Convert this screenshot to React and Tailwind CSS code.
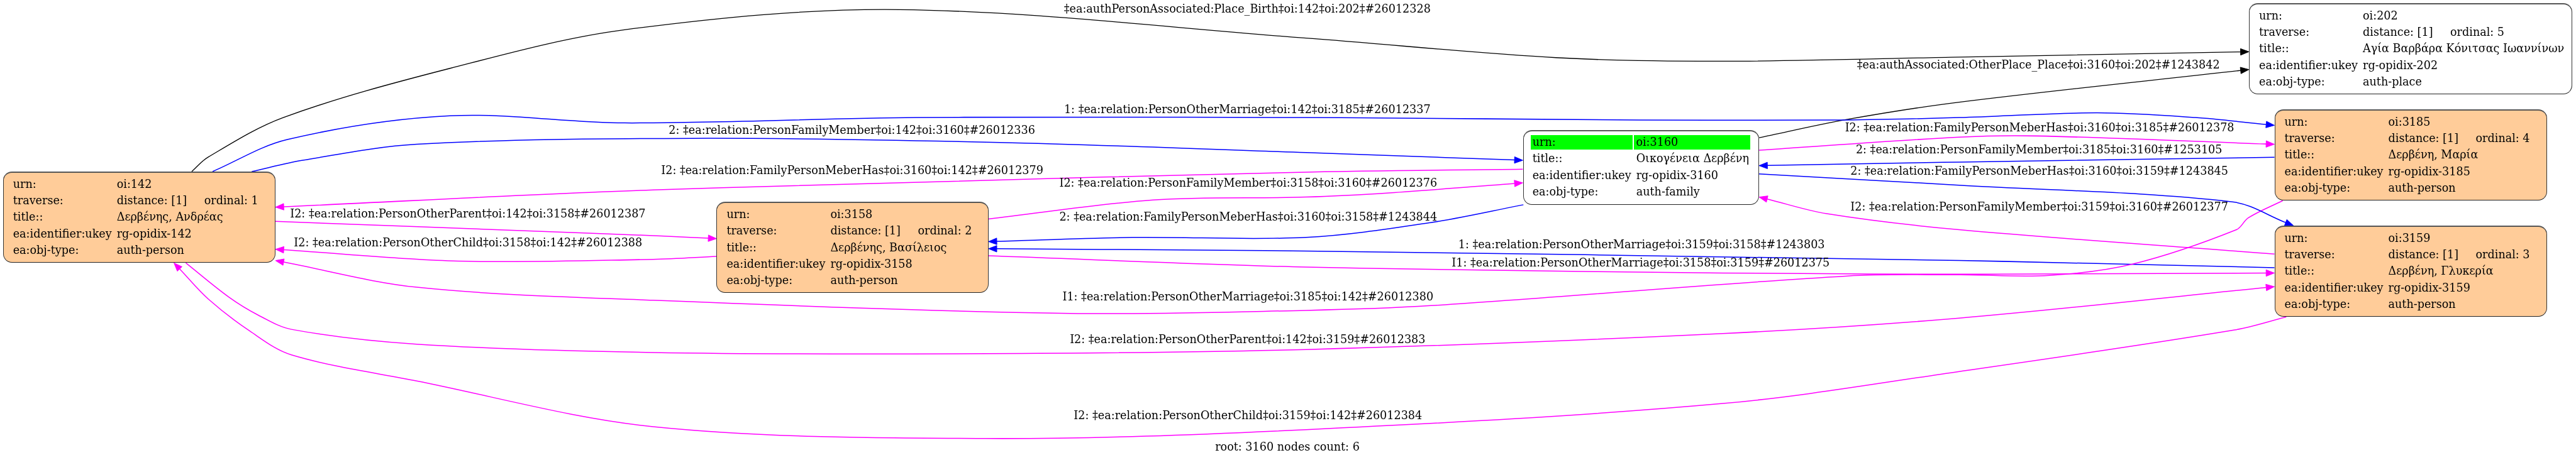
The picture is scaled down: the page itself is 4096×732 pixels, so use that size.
import React from "react";

const BLACK = "#000000";
const BLUE = "#0000ff";
const PINK = "#ff00ff";
const ARROW_LEN = 14;
const ARROW_HALF = 5.5;

// edge points are in the graph's own coordinates (viewBox 4339x775), last point is the arrow tip
const EDGES = [
  { c: BLACK, p: [[323, 289], [350, 265], [477, 198], [758, 115], [1052, 50], [1515, 16], [2200, 64], [2621, 97], [2902, 103], [3300, 96], [3788, 87]] },
  { c: BLACK, p: [[2963, 232], [3112, 201], [3300, 172], [3788, 117]] },
  { c: BLUE, p: [[358, 289], [484, 235], [758, 195], [1052, 207], [1543, 198], [2200, 198], [2761, 202], [3112, 202], [3300, 198], [3532, 190], [3698, 198], [3831, 211]] },
  { c: BLUE, p: [[424, 289], [510, 270], [702, 243], [1165, 233], [1684, 240], [2200, 257], [2565, 270]] },
  { c: PINK, p: [[2565, 285], [2200, 290], [1100, 320], [464, 349]] },
  { c: PINK, p: [[1665, 369], [1942, 337], [2200, 332], [2340, 325], [2565, 308]] },
  { c: BLUE, p: [[2566, 345], [2410, 375], [2200, 400], [1907, 400], [1665, 407]] },
  { c: PINK, p: [[464, 373], [1100, 397], [1207, 402]] },
  { c: PINK, p: [[1207, 432], [1100, 437], [772, 440], [464, 420]] },
  { c: BLUE, p: [[3831, 451], [3300, 439], [2200, 423], [1665, 419]] },
  { c: PINK, p: [[1665, 431], [2200, 450], [2902, 460], [3300, 462], [3831, 460]] },
  { c: PINK, p: [[3845, 338], [3787, 367], [3767, 387], [3592, 445], [3452, 464], [3300, 463], [3112, 465], [2410, 515], [2200, 523], [1802, 528], [1100, 506], [702, 484], [464, 439]] },
  { c: PINK, p: [[313, 443], [386, 501], [435, 531], [491, 555], [702, 580], [1100, 594], [1661, 596], [2200, 589], [2902, 562], [3300, 536], [3831, 483]] },
  { c: PINK, p: [[3851, 534], [3764, 556], [3300, 626], [2902, 680], [2200, 724], [1661, 739], [1100, 719], [702, 642], [491, 598], [421, 558], [351, 504], [293, 443]] },
  { c: PINK, p: [[2963, 253], [3300, 231], [3432, 229], [3831, 243]] },
  { c: BLUE, p: [[3831, 265], [3300, 273], [2963, 279]] },
  { c: BLUE, p: [[2963, 293], [3300, 312], [3760, 340], [3863, 380]] },
  { c: PINK, p: [[3831, 428], [3300, 387], [3077, 360], [2963, 332]] },
];

const LABELS = [
  { t: "‡ea:authPersonAssociated:Place_Birth‡oi:142‡oi:202‡#26012328", pos: "left-[1983.3px] top-[15.1px]" },
  { t: "‡ea:authAssociated:OtherPlace_Place‡oi:3160‡oi:202‡#1243842", pos: "left-[3241.2px] top-[104.3px]" },
  { t: "1: ‡ea:relation:PersonOtherMarriage‡oi:142‡oi:3185‡#26012337", pos: "left-[1983.3px] top-[174.6px]" },
  { t: "2: ‡ea:relation:PersonFamilyMember‡oi:142‡oi:3160‡#26012336", pos: "left-[1354.6px] top-[207.7px]" },
  { t: "I2: ‡ea:relation:FamilyPersonMeberHas‡oi:3160‡oi:142‡#26012379", pos: "left-[1355.1px] top-[272.3px]" },
  { t: "I2: ‡ea:relation:PersonFamilyMember‡oi:3158‡oi:3160‡#26012376", pos: "left-[1984.8px] top-[292.2px]" },
  { t: "2: ‡ea:relation:FamilyPersonMeberHas‡oi:3160‡oi:3158‡#1243844", pos: "left-[1984.8px] top-[345.5px]" },
  { t: "I2: ‡ea:relation:PersonOtherParent‡oi:142‡oi:3158‡#26012387", pos: "left-[743.9px] top-[341.3px]" },
  { t: "I2: ‡ea:relation:PersonOtherChild‡oi:3158‡oi:142‡#26012388", pos: "left-[744.3px] top-[387px]" },
  { t: "1: ‡ea:relation:PersonOtherMarriage‡oi:3159‡oi:3158‡#1243803", pos: "left-[2610.2px] top-[389.9px]" },
  { t: "I1: ‡ea:relation:PersonOtherMarriage‡oi:3158‡oi:3159‡#26012375", pos: "left-[2608.8px] top-[419.1px]" },
  { t: "I1: ‡ea:relation:PersonOtherMarriage‡oi:3185‡oi:142‡#26012380", pos: "left-[1984.3px] top-[472.9px]" },
  { t: "I2: ‡ea:relation:PersonOtherParent‡oi:142‡oi:3159‡#26012383", pos: "left-[1983.8px] top-[540.9px]" },
  { t: "I2: ‡ea:relation:PersonOtherChild‡oi:3159‡oi:142‡#26012384", pos: "left-[1984.3px] top-[661.7px]" },
  { t: "root: 3160 nodes count: 6", pos: "left-[2047px] top-[711.8px]" },
  { t: "I2: ‡ea:relation:FamilyPersonMeberHas‡oi:3160‡oi:3185‡#26012378", pos: "left-[3243.1px] top-[204.4px]" },
  { t: "2: ‡ea:relation:PersonFamilyMember‡oi:3185‡oi:3160‡#1253105", pos: "left-[3242.2px] top-[239.4px]" },
  { t: "2: ‡ea:relation:FamilyPersonMeberHas‡oi:3160‡oi:3159‡#1243845", pos: "left-[3242.6px] top-[273.3px]" },
  { t: "I2: ‡ea:relation:PersonFamilyMember‡oi:3159‡oi:3160‡#26012377", pos: "left-[3242.6px] top-[329.5px]" },
];

// smooth curve through the points, handles a third of the segment long
function spline(pts) {
  const tangent = (i) => {
    const a = pts[Math.max(i - 1, 0)];
    const b = pts[Math.min(i + 1, pts.length - 1)];
    const dx = b[0] - a[0];
    const dy = b[1] - a[1];
    const len = Math.hypot(dx, dy) || 1;
    return [dx / len, dy / len];
  };
  let d = `M${pts[0][0]} ${pts[0][1]}`;
  for (let i = 0; i < pts.length - 1; i++) {
    const a = pts[i];
    const b = pts[i + 1];
    const h = Math.hypot(b[0] - a[0], b[1] - a[1]) / 3;
    const ta = tangent(i);
    const tb = tangent(i + 1);
    d += `C${a[0] + ta[0] * h} ${a[1] + ta[1] * h} ${b[0] - tb[0] * h} ${b[1] - tb[1] * h} ${b[0]} ${b[1]}`;
  }
  return d;
}

function Edge({ c, p }) {
  const tip = p[p.length - 1];
  const prev = p[p.length - 2];
  const len = Math.hypot(tip[0] - prev[0], tip[1] - prev[1]);
  const ux = (tip[0] - prev[0]) / len;
  const uy = (tip[1] - prev[1]) / len;
  const bx = tip[0] - ux * ARROW_LEN;
  const by = tip[1] - uy * ARROW_LEN;
  const line = [...p.slice(0, -1), [bx, by]];
  const head = `${tip[0]},${tip[1]} ${bx - uy * ARROW_HALF},${by + ux * ARROW_HALF} ${bx + uy * ARROW_HALF},${by - ux * ARROW_HALF}`;
  return (
    <g>
      <path d={spline(line)} fill="none" stroke={c} strokeWidth={c === BLACK ? 1.4 : 1.6} />
      <polygon points={head} fill={c} stroke={c} strokeWidth="1" />
    </g>
  );
}

function Row({ k, v, extra }) {
  return (
    <div className="flex items-center h-[26.4px] whitespace-nowrap">
      <span className="w-[165px] shrink-0">{k}</span>
      <span className={extra ? "w-[139px] shrink-0" : ""}>{v}</span>
      {extra && <span>{extra}</span>}
    </div>
  );
}

function Node({ className, urn, ordinal, title, ukey, type }) {
  return (
    <div className={`absolute h-[145.4px] rounded-[14px] border-[1.4px] border-[#333333] border-t-[2.4px] border-t-[#555555] border-b-[1.8px] border-b-[#222222] px-[15px] pt-[5.5px] ${className}`}>
      <Row k="urn:" v={urn} />
      <Row k="traverse:" v="distance: [1]" extra={`ordinal: ${ordinal}`} />
      <Row k="title::" v={title} />
      <Row k="ea:identifier:ukey" v={ukey} />
      <Row k="ea:obj-type:" v={type} />
    </div>
  );
}

export default function App() {
  return (
    <div className="relative w-[4096px] h-[732px] bg-white text-black overflow-hidden font-['DejaVu_Serif',serif] text-[17.6px] leading-none">
      <svg className="absolute inset-0 w-[4096px] h-[732px]" viewBox="0 0 4339 775">
        {EDGES.map((e, i) => (
          <Edge key={i} c={e.c} p={e.p} />
        ))}
      </svg>

      {/* own layer, keeps the text greyscale antialiased like the reference */}
      <div className="absolute inset-0 will-change-transform">
        {LABELS.map((l) => (
          <span key={l.t} className={`absolute -translate-x-1/2 -translate-y-1/2 whitespace-nowrap ${l.pos}`}>
            {l.t}
          </span>
        ))}

        <Node className="left-[4.7px] top-[272.8px] w-[433.3px] bg-[#ffcc99]" urn="oi:142" ordinal="1" title="Δερβένης, Ανδρέας" ukey="rg-opidix-142" type="auth-person" />
        <Node className="left-[1139.4px] top-[321px] w-[432.4px] bg-[#ffcc99]" urn="oi:3158" ordinal="2" title="Δερβένης, Βασίλειος" ukey="rg-opidix-3158" type="auth-person" />
        <Node className="left-[3616.5px] top-[173.7px] w-[433.3px] bg-[#ffcc99]" urn="oi:3185" ordinal="4" title="Δερβένη, Μαρία" ukey="rg-opidix-3185" type="auth-person" />
        <Node className="left-[3616.5px] top-[358.7px] w-[433.3px] bg-[#ffcc99]" urn="oi:3159" ordinal="3" title="Δερβένη, Γλυκερία" ukey="rg-opidix-3159" type="auth-person" />
        <Node className="left-[3576px] top-[4.7px] w-[513.5px] bg-white" urn="oi:202" ordinal="5" title="Αγία Βαρβάρα Κόνιτσας Ιωαννίνων" ukey="rg-opidix-202" type="auth-place" />

        {/* root node, the urn row is highlighted */}
        <div className="absolute left-[2421.6px] top-[206.8px] w-[375.4px] h-[119px] rounded-[14px] border-[1.4px] border-[#333333] border-t-[2.4px] border-t-[#555555] border-b-[1.8px] border-b-[#222222] bg-white pl-[11.6px] pt-[6px]">
          <div className="flex items-center h-[23.6px] gap-[2.2px] mb-[1.5px]">
            <span className="w-[162px] h-full bg-[#00ff00] pl-[2.5px] flex items-center">urn:</span>
            <span className="w-[185px] h-full bg-[#00ff00] pl-[3px] flex items-center">oi:3160</span>
          </div>
          <div className="pl-[2.5px]">
            <div className="flex items-center h-[26.4px]">
              <span className="w-[165px] shrink-0">title::</span>
              <span>Οικογένεια Δερβένη</span>
            </div>
            <div className="flex items-center h-[26.4px]">
              <span className="w-[165px] shrink-0">ea:identifier:ukey</span>
              <span>rg-opidix-3160</span>
            </div>
            <div className="flex items-center h-[26.4px]">
              <span className="w-[165px] shrink-0">ea:obj-type:</span>
              <span>auth-family</span>
            </div>
          </div>
        </div>
      </div>
    </div>
  );
}
